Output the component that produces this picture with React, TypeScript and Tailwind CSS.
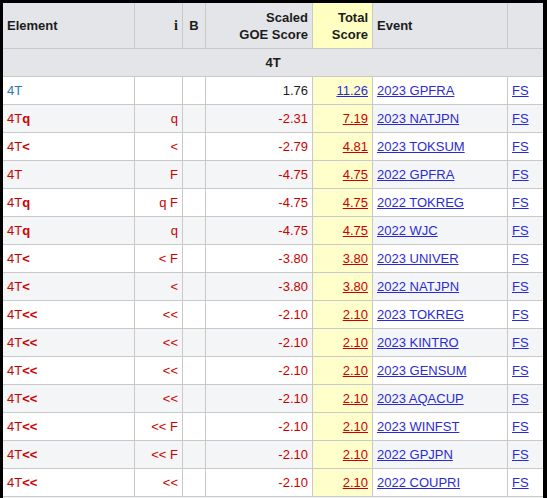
const rows = [
  { mod: "", i: "", goe: "1.76", total: "11.26", event: "2023 GPFRA", good: true },
  { mod: "q", i: "q", goe: "-2.31", total: "7.19", event: "2023 NATJPN" },
  { mod: "<", i: "<", goe: "-2.79", total: "4.81", event: "2023 TOKSUM" },
  { mod: "", i: "F", goe: "-4.75", total: "4.75", event: "2022 GPFRA" },
  { mod: "q", i: "q F", goe: "-4.75", total: "4.75", event: "2022 TOKREG" },
  { mod: "q", i: "q", goe: "-4.75", total: "4.75", event: "2022 WJC" },
  { mod: "<", i: "< F", goe: "-3.80", total: "3.80", event: "2023 UNIVER" },
  { mod: "<", i: "<", goe: "-3.80", total: "3.80", event: "2022 NATJPN" },
  { mod: "<<", i: "<<", goe: "-2.10", total: "2.10", event: "2023 TOKREG" },
  { mod: "<<", i: "<<", goe: "-2.10", total: "2.10", event: "2023 KINTRO" },
  { mod: "<<", i: "<<", goe: "-2.10", total: "2.10", event: "2023 GENSUM" },
  { mod: "<<", i: "<<", goe: "-2.10", total: "2.10", event: "2023 AQACUP" },
  { mod: "<<", i: "<< F", goe: "-2.10", total: "2.10", event: "2023 WINFST" },
  { mod: "<<", i: "<< F", goe: "-2.10", total: "2.10", event: "2022 GPJPN" },
  { mod: "<<", i: "<<", goe: "-2.10", total: "2.10", event: "2022 COUPRI" },
];

const App = () => {
  const cell = "border-b border-r border-[#c9c9c9] px-[4px] whitespace-nowrap";

  return (
    <div className="w-[547px] h-[498px] overflow-hidden bg-white font-['Liberation_Sans',Arial,sans-serif] text-[13px] text-[#1c1c1c]">
      {/* black frame continues below the last visible row */}
      <div className="h-full border-l-[3px] border-t-[3px] border-r-[4px] border-black bg-[#f4f5f7]">
        <table className="w-full table-fixed border-separate border-spacing-0">
          <thead>
            <tr className="h-[46px] bg-[#e3e5e9] font-bold">
              <th className={`${cell} w-[132px] text-left`}>Element</th>
              <th className={`${cell} w-[48px] text-right font-['Liberation_Serif',serif] text-[14px]`}>i</th>
              <th className={`${cell} w-[23px] text-center`}>B</th>
              <th className={`${cell} w-[107px] text-right leading-[17px]`}>
                Scaled
                <br />
                GOE Score
              </th>
              <th className={`${cell} w-[60px] text-right leading-[17px] bg-[#ffffc2]`}>
                Total
                <br />
                Score
              </th>
              <th className={`${cell} w-[135px] text-left`}>Event</th>
              <th className="border-b border-[#c9c9c9] w-[35px]"></th>
            </tr>
          </thead>
          <tbody>
            <tr className="h-[28px] bg-[#e3e5e9]">
              <td colSpan={7} className="border-b border-[#c9c9c9] text-center font-bold">
                4T
              </td>
            </tr>
            {rows.map((r, idx) => {
              const red = r.good ? "" : "text-[#cc0000]";
              return (
                <tr key={idx} className={`h-[28px] ${idx % 2 === 1 ? "bg-[#f4f5f7]" : "bg-white"}`}>
                  <td className={`${cell} ${r.good ? "text-[#2a77b6]" : "text-[#cc0000]"}`}>
                    4T<span className="font-bold">{r.mod}</span>
                  </td>
                  <td className={`${cell} text-right text-[#cc0000]`}>{r.i}</td>
                  <td className={cell}></td>
                  <td className={`${cell} text-right ${red}`}>{r.goe}</td>
                  <td className={`${cell} text-right bg-[#ffffcc]`}>
                    <a href="#" className={`underline ${r.good ? "text-[#2b2bd6]" : "text-[#cc0000]"}`}>
                      {r.total}
                    </a>
                  </td>
                  <td className={cell}>
                    <a href="#" className="underline text-[#2b2bd6]">
                      {r.event}
                    </a>
                  </td>
                  <td className="border-b border-[#c9c9c9] px-[4px]">
                    <a href="#" className="underline text-[#2b2bd6]">
                      FS
                    </a>
                  </td>
                </tr>
              );
            })}
          </tbody>
        </table>
      </div>
    </div>
  );
};

export default App;
